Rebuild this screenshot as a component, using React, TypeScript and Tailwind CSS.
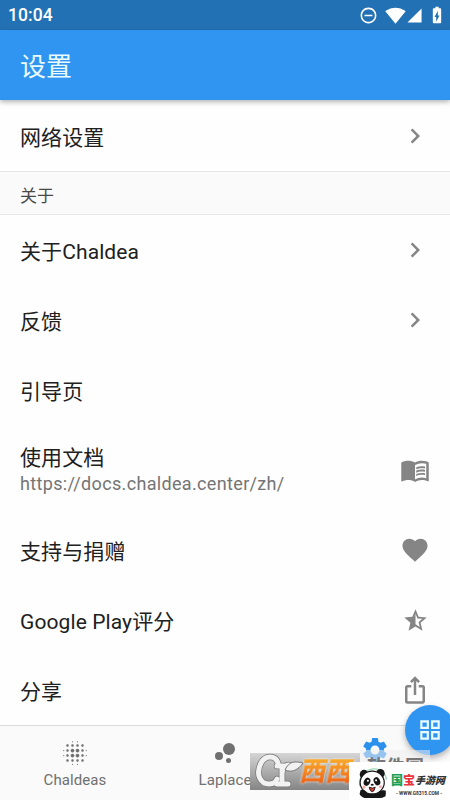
import type { ReactNode } from 'react';
import {
  MdBatteryChargingFull,
  MdBlurOn,
  MdBubbleChart,
  MdChevronRight,
  MdFavorite,
  MdGridView,
  MdIosShare,
  MdMenuBook,
  MdRemoveCircleOutline,
  MdSettings,
  MdSignalCellular4Bar,
  MdSignalWifi4Bar,
  MdStarHalf,
} from 'react-icons/md';

type SettingRowProps = {
  title: string;
  subtitle?: string;
  icon?: ReactNode;
};

const SettingRow = ({ title, subtitle, icon }: SettingRowProps) => (
  <li
    className={`flex shrink-0 items-center justify-between px-5 ${subtitle ? 'h-[90px]' : 'h-[70px]'}`}
  >
    <div className={subtitle ? '' : 'pt-1'}>
      <p className="text-[21px] leading-[28px] tracking-[0.1px] text-[#202020]">{title}</p>
      {subtitle && (
        <p className="text-[18px] leading-[24px] tracking-[0.34px] text-[#747474]">{subtitle}</p>
      )}
    </div>
    <span className="flex w-[30px] justify-center text-[30px] text-[#858585]">{icon}</span>
  </li>
);

const StatusBar = () => (
  <div className="flex h-[30px] shrink-0 items-center justify-between bg-[#2371b5] pr-[3px] pl-2 text-white">
    <span className="pt-px text-[17.5px] font-medium tracking-[0.1px]">10:04</span>
    <div className="flex items-center">
      <MdRemoveCircleOutline className="mr-[7px] size-[19px]" />
      <MdSignalWifi4Bar className="size-[21px]" />
      <MdSignalCellular4Bar className="mr-[4px] size-[17px]" />
      <MdBatteryChargingFull className="size-[20px]" />
    </div>
  </div>
);

type NavItemProps = {
  label?: string;
  active?: boolean;
  icon: ReactNode;
};

const NavItem = ({ label, active = false, icon }: NavItemProps) => (
  <div
    className={`flex flex-1 flex-col items-center ${active ? 'pt-[9px] text-[#2b91ed]' : 'pt-[12px] text-[#707070]'}`}
  >
    <span className="text-[30px] leading-[30px]">{icon}</span>
    <span className="mt-[2px] text-[15px] leading-[20px] tracking-[0.1px]">{label}</span>
  </div>
);

const LeafMark = () => (
  <svg className="absolute top-0 left-[5px] h-[36px] w-[50px]" viewBox="0 0 50 36" fill="none">
    <g stroke="#777" strokeWidth="6.4" strokeLinecap="round">
      <path d="M23 10C21 3 11 1 6 10C0 22 6 31 14 31C18 31 21 29 22 26" />
      <path d="M22 13H27V31M22 31H33M27 20C28 14 31 12 34 12" />
    </g>
    <g stroke="#f2f2f2" strokeWidth="5" strokeLinecap="round">
      <path d="M23 10C21 3 11 1 6 10C0 22 6 31 14 31C18 31 21 29 22 26" />
      <path d="M22 13H27V31M22 31H33M27 20C28 14 31 12 34 12" />
    </g>
    <path d="M30 17C34 8 40 8 48 10C43 17 37 20 30 17Z" fill="#f2f2f2" stroke="#777" />
  </svg>
);

const Panda = () => (
  <svg className="h-[31px] w-[31px] shrink-0" viewBox="0 0 36 34" preserveAspectRatio="none">
    <path d="M2 20C0 8 10 1 19 1C27 1 33 7 33 13" fill="none" stroke="#9ed9b7" strokeWidth="1.5" />
    <path d="M5 25L2 29Q5 33 10 33H26Q33 33 32 25Z" fill="#171717" />
    <circle cx="7" cy="7" r="5" fill="#171717" />
    <circle cx="26" cy="6" r="5" fill="#171717" />
    <ellipse cx="16.5" cy="16" rx="14" ry="12.5" fill="#fff" stroke="#171717" strokeWidth="1.4" />
    <ellipse cx="10.5" cy="15" rx="3.6" ry="4.7" transform="rotate(28 10.5 15)" fill="#171717" />
    <ellipse cx="22" cy="14.5" rx="3.6" ry="4.7" transform="rotate(-28 22 14.5)" fill="#171717" />
    <circle cx="11.5" cy="14" r="1.2" fill="#fff" />
    <circle cx="21" cy="13.5" r="1.2" fill="#fff" />
    <ellipse cx="16.5" cy="18.5" rx="1.8" ry="1.1" fill="#171717" />
    <path d="M13 21Q17 23 20 21Q19 26 16.5 26Q14 26 13 21Z" fill="#d63b35" stroke="#171717" />
    <circle cx="7" cy="21" r="1.7" fill="#f7a9a4" />
    <circle cx="26" cy="20.5" r="1.7" fill="#f7a9a4" />
    <path d="M3 24Q10 23 11 30Q5 34 2 28Z" fill="#171717" />
    <path d="M23 29Q26 23 32 25V31Q26 34 23 29Z" fill="#171717" />
  </svg>
);

const Watermarks = () => (
  <>
    <div className="absolute top-[753px] left-[250px] h-[37px] w-[110px] overflow-hidden bg-linear-to-b from-[#d6d6d6] to-[#858585]">
      <LeafMark />
      <span className="absolute top-[3px] left-[51px] -skew-x-12 bg-linear-to-b from-[#f9b22b] to-[#ea5a18] bg-clip-text text-[26px] leading-[30px] font-black whitespace-nowrap text-transparent drop-shadow-[0_0_1px_#fff]">
        西西
      </span>
    </div>
    <div className="absolute top-[750px] left-[360px] h-[13px] w-[70px] overflow-hidden bg-[#eeeeee]/55">
      <span className="absolute top-[6px] left-[7px] text-[19px] leading-[24px] font-bold whitespace-nowrap text-[#777]">
        软件园
      </span>
    </div>
    <div className="absolute top-[762px] left-[349px] flex h-[38px] w-[101px] items-start bg-white pt-[6px] pl-[9px]">
      <Panda />
      <div className="w-[56px] pt-[4px] pl-[2px]">
        <p className="flex items-center leading-[18px] font-black whitespace-nowrap">
          <span className="text-[12px] text-[#13a257]">国</span>
          <span className="text-[12px] text-[#e9343d]">宝</span>
          <span className="text-[10px] text-[#333] italic">手游网</span>
        </p>
        <p className="pl-[5px] text-[4.8px] leading-[8px] font-bold whitespace-nowrap text-[#333]">
          - WWW.G8315.COM -
        </p>
      </div>
    </div>
  </>
);

export default function App() {
  return (
    <div className="relative flex h-[800px] w-[450px] flex-col overflow-hidden bg-[#fefefe] font-[Roboto,'Noto_Sans_CJK_SC',sans-serif]">
      <StatusBar />
      <header className="z-10 flex h-[70px] shrink-0 items-center bg-[#2f95f1] pt-1 pl-5 shadow-[0_2px_5px_rgba(0,0,0,0.3)]">
        <h1 className="text-[26px] leading-[36px] text-[#e9fbff]">设置</h1>
      </header>
      <ul className="shrink-0 pt-px">
        <SettingRow title="网络设置" icon={<MdChevronRight />} />
      </ul>
      <h2 className="flex h-[44px] shrink-0 items-center border-y border-[#e7e7e7] bg-[#fafafa] pt-[8px] pl-5 text-[17px] text-[#484848]">
        关于
      </h2>
      <ul className="flex h-[510px] shrink-0 flex-col">
        <SettingRow title="关于Chaldea" icon={<MdChevronRight />} />
        <SettingRow title="反馈" icon={<MdChevronRight />} />
        <SettingRow title="引导页" />
        <SettingRow
          title="使用文档"
          subtitle="https://docs.chaldea.center/zh/"
          icon={<MdMenuBook />}
        />
        <SettingRow title="支持与捐赠" icon={<MdFavorite />} />
        <SettingRow title="Google Play评分" icon={<MdStarHalf className="size-[27px]" />} />
        <SettingRow title="分享" icon={<MdIosShare />} />
      </ul>
      <nav className="flex flex-1 border-t border-[#dadada] bg-[#fafafa]">
        <NavItem label="Chaldeas" icon={<MdBlurOn />} />
        <NavItem label="Laplace" icon={<MdBubbleChart />} />
        <NavItem active icon={<MdSettings />} />
      </nav>
      <button className="absolute top-[705px] left-[405px] flex size-[50px] items-center justify-center rounded-full bg-[#2f95f1] text-[#e9fbff] shadow-[0_3px_6px_rgba(0,0,0,0.3)]">
        <MdGridView className="size-[26px]" />
      </button>
      <Watermarks />
    </div>
  );
}
